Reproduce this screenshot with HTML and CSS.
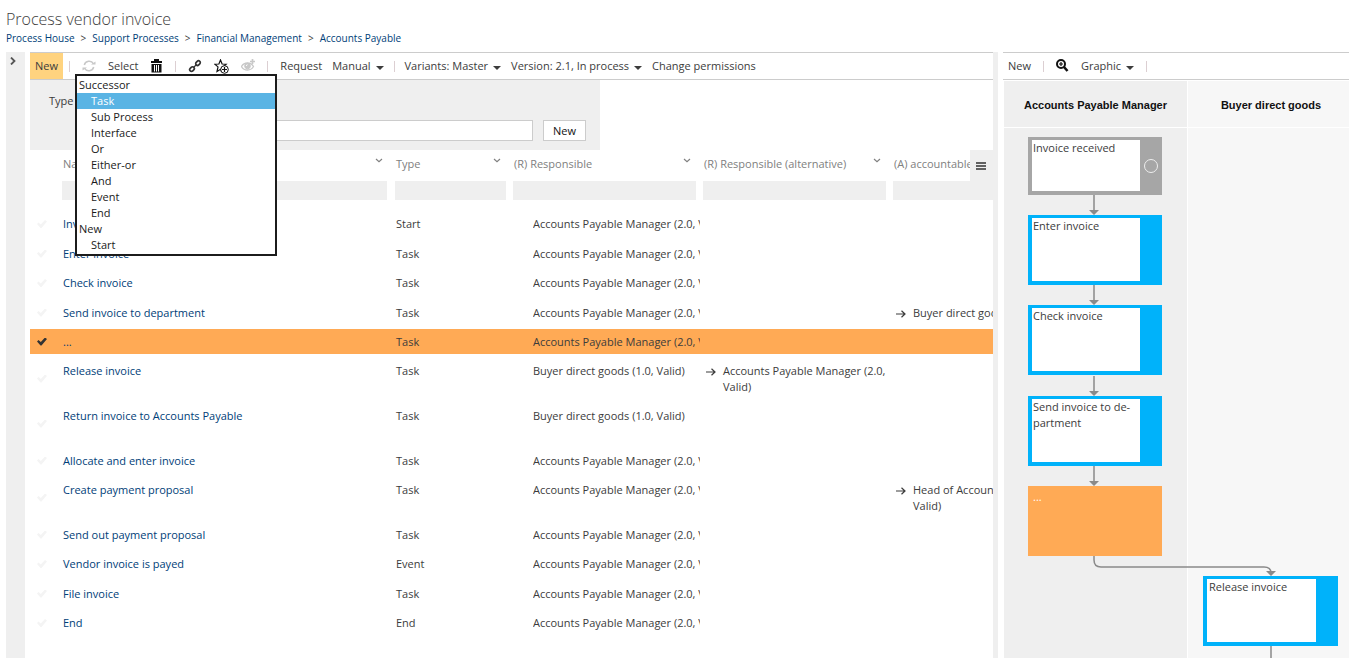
FILE: index.html
```html
<!DOCTYPE html>
<html lang="en">
<head>
<meta charset="utf-8">
<title>Process vendor invoice</title>
<link rel="stylesheet" href="styles.css">
</head>
<body>
<svg class="defs" aria-hidden="true">
  <symbol id="chev" viewBox="0 0 8 5"><path d="M1 1l3 2.600L7 1" fill="none" stroke="currentColor" stroke-width="1.200"/></symbol>
  <symbol id="caret" viewBox="0 0 8 4"><path d="M0 0h8L4 4z" fill="currentColor"/></symbol>
  <symbol id="arrow" viewBox="0 0 10 8"><path d="M0 4h9M5.500 .8L9 4 5.500 7.200" fill="none" stroke="currentColor" stroke-width="1.200"/></symbol>
</svg>
<header class="page-head">
  <h1 class="title">Process vendor invoice</h1>
  <nav class="crumbs" aria-label="Breadcrumb">
    <a href="#">Process House</a><span>&gt;</span><a href="#">Support Processes</a><span>&gt;</span><a href="#">Financial Management</a><span>&gt;</span><a href="#">Accounts Payable</a>
  </nav>
</header>
<main class="workspace">
  <aside class="rail">
    <button class="rail-toggle" aria-label="Expand"><svg width="6" height="8" viewBox="0 0 6 8"><path d="M1 .5L4.500 4 1 7.500" fill="none" stroke="#555" stroke-width="1.800"/></svg></button>
  </aside>
  <section class="list-pane">
    <div class="toolbar">
      <button class="tool tool-active">New</button>
      <i class="sep sep-first"></i>
      <button class="tool" aria-label="Refresh"><svg width="14" height="14" viewBox="0 0 14 14" fill="none" stroke="#c8c8c8" stroke-width="1.500"><path d="M2.300 6A5 5 0 0 1 11.500 4.800M11.700 8A5 5 0 0 1 2.500 9.200"/><path d="M9 5.500h4.500V2.500zM5 8.500H.5v3z" fill="#c8c8c8" stroke="none"/></svg></button>
      <button class="tool">Select</button>
      <button class="tool" aria-label="Delete"><svg width="13" height="14" viewBox="0 0 13 14"><path d="M4 0h5v2h3v2H1V2h3zM1.500 5h10v8.500h-10z" fill="#111"/><path d="M4.500 6v6.500M6.500 6v6.500M8.500 6v6.500" stroke="#fff"/></svg></button>
      <i class="sep"></i>
      <button class="tool" aria-label="Link"><svg width="14" height="14" viewBox="0 0 14 14" fill="none" stroke="#333" stroke-width="1.700"><rect x="7.500" y="2.300" width="5" height="3.600" rx="1.800" transform="rotate(-45 10 4.100)"/><rect x="1.500" y="8.300" width="5" height="3.600" rx="1.800" transform="rotate(-45 4 10.100)"/><path d="M5.500 8.500l3-3" stroke-width="1.300"/></svg></button>
      <button class="tool" aria-label="Add favourite"><svg width="15" height="15" viewBox="0 0 15 15" fill="none" stroke="#111"><path d="M6.500 1l1.600 4 4 .2-3 2.600L7 11.500l-.5-1.200L3 12.500l1-4.600L.8 5.200l4.100-.2z" stroke-width="1.200"/><circle cx="10.500" cy="10.500" r="3.800" fill="#fff"/><path d="M10.500 8v5M8 10.500h5" stroke-width="1.200"/></svg></button>
      <button class="tool" aria-label="Watch"><svg width="14" height="14" viewBox="0 0 14 14" fill="none" stroke="#c8c8c8"><path d="M.5 7.500Q2.500 4 6.500 4T12.500 7.500Q10.500 11 6.500 11T.5 7.500z" stroke-width="1.300"/><circle cx="6.500" cy="7" r="2.800" fill="#c8c8c8"/><path d="M5.300 7q0-1.300 1.200-1.300" stroke="#fff"/><path d="M11.500 0v5M9 2.500h5" stroke-width="1.700"/></svg></button>
      <i class="sep"></i>
      <div class="tool-group">
        <button class="tool">Request</button>
        <button class="tool">Manual<svg class="caret"><use href="#caret"/></svg></button>
        <i class="sep"></i>
        <button class="tool">Variants: Master<svg class="caret"><use href="#caret"/></svg></button>
        <button class="tool">Version: 2.1, In process<svg class="caret"><use href="#caret"/></svg></button>
        <button class="tool">Change permissions</button>
      </div>
    </div>
    <form class="create-form">
      <label class="field-label" for="type">Type</label>
      <div class="type-field">
        <select id="type" class="type-list" size="11">
          <optgroup label="Successor">
            <option selected>Task</option><option>Sub Process</option><option>Interface</option><option>Or</option><option>Either-or</option><option>And</option><option>Event</option><option>End</option>
          </optgroup>
          <optgroup label="New"><option>Start</option></optgroup>
        </select>
      </div>
      <input class="name-input" type="text" aria-label="Name">
      <button class="create-btn" type="button">New</button>
    </form>
    <div class="grid-wrap">
      <button class="grid-menu" aria-label="Columns"><svg width="10" height="8" viewBox="0 0 10 8"><path d="M0 1h10M0 4h10M0 7h10" stroke="#333" stroke-width="1.500"/></svg></button>
      <table class="grid">
        <colgroup><col class="c-check"><col class="c-name"><col class="c-type"><col class="c-role"><col class="c-role"><col class="c-role"></colgroup>
        <thead>
          <tr class="heads"><th></th><th>Name<svg class="chev"><use href="#chev"/></svg></th><th>Type<svg class="chev"><use href="#chev"/></svg></th><th>(R) Responsible<svg class="chev"><use href="#chev"/></svg></th><th>(R) Responsible (alternative)<svg class="chev"><use href="#chev"/></svg></th><th>(A) accountable</th></tr>
          <tr class="filters"><td></td><td><input class="filter" aria-label="Filter name"></td><td><input class="filter" aria-label="Filter type"></td><td><input class="filter" aria-label="Filter responsible"></td><td><input class="filter" aria-label="Filter alternative"></td><td><input class="filter" aria-label="Filter accountable"></td></tr>
        </thead>
        <tbody>
          <tr><td><input type="checkbox" class="tick" aria-label="Invoice received"></td><td><a href="#">Invoice received</a></td><td>Start</td><td><div class="role">Accounts Payable Manager (2.0, Valid)</div></td><td></td><td></td></tr>
          <tr><td><input type="checkbox" class="tick" aria-label="Enter invoice"></td><td><a href="#">Enter invoice</a></td><td>Task</td><td><div class="role">Accounts Payable Manager (2.0, Valid)</div></td><td></td><td></td></tr>
          <tr><td><input type="checkbox" class="tick" aria-label="Check invoice"></td><td><a href="#">Check invoice</a></td><td>Task</td><td><div class="role">Accounts Payable Manager (2.0, Valid)</div></td><td></td><td></td></tr>
          <tr><td><input type="checkbox" class="tick" aria-label="Send invoice to department"></td><td><a href="#">Send invoice to department</a></td><td>Task</td><td><div class="role">Accounts Payable Manager (2.0, Valid)</div></td><td></td><td><div class="ref"><svg class="arrow"><use href="#arrow"/></svg>Buyer direct goods (1.0, Valid)</div></td></tr>
          <tr class="selected"><td><input type="checkbox" class="tick" checked aria-label="..."></td><td><a href="#">...</a></td><td>Task</td><td><div class="role">Accounts Payable Manager (2.0, Valid)</div></td><td></td><td></td></tr>
          <tr class="tall"><td><input type="checkbox" class="tick" aria-label="Release invoice"></td><td><a href="#">Release invoice</a></td><td>Task</td><td><div class="role">Buyer direct goods (1.0, Valid)</div></td><td><div class="ref"><svg class="arrow"><use href="#arrow"/></svg><span>Accounts Payable Manager (2.0,<br>Valid)</span></div></td><td></td></tr>
          <tr class="tall"><td><input type="checkbox" class="tick" aria-label="Return invoice"></td><td><a href="#">Return invoice to Accounts Payable</a></td><td>Task</td><td><div class="role">Buyer direct goods (1.0, Valid)</div></td><td></td><td></td></tr>
          <tr><td><input type="checkbox" class="tick" aria-label="Allocate and enter invoice"></td><td><a href="#">Allocate and enter invoice</a></td><td>Task</td><td><div class="role">Accounts Payable Manager (2.0, Valid)</div></td><td></td><td></td></tr>
          <tr class="tall"><td><input type="checkbox" class="tick" aria-label="Create payment proposal"></td><td><a href="#">Create payment proposal</a></td><td>Task</td><td><div class="role">Accounts Payable Manager (2.0, Valid)</div></td><td></td><td><div class="ref"><svg class="arrow"><use href="#arrow"/></svg><span>Head of Accounting (1.0,<br>Valid)</span></div></td></tr>
          <tr><td><input type="checkbox" class="tick" aria-label="Send out payment proposal"></td><td><a href="#">Send out payment proposal</a></td><td>Task</td><td><div class="role">Accounts Payable Manager (2.0, Valid)</div></td><td></td><td></td></tr>
          <tr><td><input type="checkbox" class="tick" aria-label="Vendor invoice is payed"></td><td><a href="#">Vendor invoice is payed</a></td><td>Event</td><td><div class="role">Accounts Payable Manager (2.0, Valid)</div></td><td></td><td></td></tr>
          <tr><td><input type="checkbox" class="tick" aria-label="File invoice"></td><td><a href="#">File invoice</a></td><td>Task</td><td><div class="role">Accounts Payable Manager (2.0, Valid)</div></td><td></td><td></td></tr>
          <tr><td><input type="checkbox" class="tick" aria-label="End"></td><td><a href="#">End</a></td><td>End</td><td><div class="role">Accounts Payable Manager (2.0, Valid)</div></td><td></td><td></td></tr>
        </tbody>
      </table>
    </div>
  </section>
  <div class="splitter"></div>
  <section class="graph-pane">
    <div class="toolbar toolbar-graph">
      <button class="tool">New</button>
      <i class="sep"></i>
      <button class="tool" aria-label="Zoom"><svg width="13" height="14" viewBox="0 0 13 14" fill="none" stroke="#111"><circle cx="5" cy="5" r="4" stroke-width="2"/><path d="M5 3v4M3 5h4" stroke-width="1.200"/><path d="M8 8l3.500 4" stroke-width="2.500"/></svg></button>
      <button class="tool">Graphic<svg class="caret"><use href="#caret"/></svg></button>
      <i class="sep"></i>
    </div>
    <div class="lanes">
      <h2 class="lane-head">Accounts Payable Manager</h2>
      <h2 class="lane-head lane-light">Buyer direct goods</h2>
      <div class="lane"></div>
      <div class="lane lane-light"></div>
      <div class="canvas">
        <svg class="edges" width="346" height="530" viewBox="0 0 346 530" fill="none" stroke="#8a8a8a" stroke-width="1.500">
          <path d="M90 67v17M90 157v17M90 248v17M90 338v17M90 428v4q0 7 7 7h163q7 0 7 6M267 518v12"/>
          <path d="M85 82h10l-5 5zM85 172h10l-5 5zM85 263h10l-5 5zM85 353h10l-5 5zM262 443h10l-5 5z" fill="#8a8a8a" stroke="none"/>
        </svg>
        <div class="node node-start n1"><p class="node-text">Invoice received</p><span class="ring"></span></div>
        <div class="node n2"><p class="node-text">Enter invoice</p></div>
        <div class="node n3"><p class="node-text">Check invoice</p></div>
        <div class="node n4"><p class="node-text">Send invoice to de-<br>partment</p></div>
        <div class="node node-selected n5"><p class="node-text">...</p></div>
        <div class="node n6"><p class="node-text">Release invoice</p></div>
      </div>
    </div>
  </section>
</main>
</body>
</html>
```
FILE: styles.css
```css
* { box-sizing: border-box; }
body {
  margin: 0;
  height: 100vh;
  display: flex;
  flex-direction: column;
  overflow: hidden;
  background: #fff;
  color: #3c3c3c;
  font: 11px/16px "Open Sans", "Noto Sans", sans-serif;
}
button, input, select { font: inherit; color: inherit; margin: 0; }
button { background: none; border: 0; padding: 0; }
a { color: #003e78; text-decoration: none; }
svg { display: block; }
.defs { position: absolute; width: 0; height: 0; }

.page-head { height: 52px; padding: 8px 6px 0; flex: none; }
.title { margin: 0; font-size: 16px; font-weight: 300; line-height: 22px; }
.crumbs { display: flex; gap: 6px; font-size: 10px; line-height: 16px; }

.workspace { flex: 1; min-height: 0; display: flex; }
.rail { flex: none; width: 19px; margin: 0 5px 0 6px; background: #efefef; }
.rail-toggle { padding: 5px 4px; }
.list-pane { flex: 1; min-width: 0; overflow: hidden; }
.splitter { flex: none; width: 5px; margin-right: 5px; background: #efefef; }
.graph-pane { flex: none; width: 346px; display: flex; flex-direction: column; }

.toolbar {
  flex: none;
  height: 28px;
  display: flex;
  align-items: center;
  gap: 12px;
  border-top: 1px solid #ccc;
  border-bottom: 1px solid #ccc;
  white-space: nowrap;
}
.toolbar-graph { padding-left: 5px; }
.tool-group { display: flex; align-items: center; gap: 10px; }
.tool { display: flex; align-items: center; gap: 5px; }
.tool-active { align-self: stretch; padding: 0 5px; background: #ffd37f; }
.sep { width: 1px; height: 11px; background: #dccfd2; }
.sep-first { margin-left: -6px; }
.caret { width: 8px; height: 4px; margin-top: 3px; }

.create-form {
  width: 570px;
  height: 70px;
  padding: 12px 14px 9px 19px;
  display: grid;
  grid-template: 1fr 21px / 26px 1fr 43px;
  background: #efefef;
}
.field-label { line-height: 18px; }
.type-field { position: relative; grid-column: 2 / 4; }
.type-list {
  position: absolute;
  z-index: 2;
  top: -18px;
  left: 0;
  width: 202px;
  height: 182px;
  padding: 1px 0;
  border: 2px solid #1c1c1c;
  border-radius: 0;
  outline: 0;
  overflow: hidden;
  background: #fff;
  color: #1a1a1a;
}
.type-list optgroup { font-weight: 400; line-height: 16px; }
.type-list option { min-height: 16px; line-height: 16px; padding: 0 0 0 14px; }
.type-list option:checked { background: #5ab4e4; color: #fff; }
.name-input { grid-column: 2; margin-right: 10px; border: 1px solid #ccc; background: #fff; }
.create-btn { border: 1px solid #ccc; background: #fff; color: #111; }

.grid-wrap { position: relative; overflow: hidden; }
.grid-menu {
  position: absolute;
  z-index: 1;
  top: 0;
  right: 0;
  width: 23px;
  height: 31px;
  padding-left: 6px;
  background: #efefef;
}
.grid { table-layout: fixed; width: 1053px; border-spacing: 0; }
.c-check { width: 32px; }
.c-name { width: 333px; }
.c-type { width: 118px; }
.c-role { width: 190px; }
.grid th, .grid td { padding: 0; text-align: left; vertical-align: top; }
.heads th {
  position: relative;
  height: 31px;
  padding: 6px 0 0 1px;
  font-weight: 400;
  color: #808080;
}
.chev { position: absolute; top: 8px; right: 12px; width: 8px; height: 5px; }
.filters td { height: 30px; padding-right: 7px; }
.filters td:nth-child(2) { padding-right: 8px; }
.filter { display: block; width: 100%; height: 19px; padding: 0 2px; border: 0; background: #efefef; }
.grid tbody td {
  height: 29px;
  padding: 5px 0 0 1px;
  border-bottom: 4px solid transparent;
  background-clip: padding-box;
}
.grid tbody tr:nth-child(odd) td { height: 30px; }
.grid tbody tr.selected td { height: 29px; background-color: #ffaa55; }
.grid tbody tr.tall td { height: 45px; }
.grid tbody td:first-child { padding: 0 0 0 7px; vertical-align: middle; }
.tick {
  display: block;
  appearance: none;
  width: 10px;
  height: 8px;
  background: #f4f4f4;
  clip-path: polygon(0 50%, 15% 32%, 38% 55%, 80% 0, 100% 18%, 45% 100%, 35% 100%);
}
.tick:checked { background: #333; }
.role { margin-left: 19px; width: 167px; overflow: hidden; white-space: nowrap; }
.ref { display: flex; gap: 7px; padding-left: 2px; white-space: nowrap; }
.arrow { flex: none; width: 10px; height: 8px; margin-top: 5px; }

.lanes {
  position: relative;
  flex: 1;
  min-height: 0;
  display: grid;
  grid-template: 46px 1fr / 183px 1fr;
  gap: 1px;
  padding: 1px 0 0 1px;
}
.lane-head {
  margin: 0;
  background: #efefef;
  color: #111;
  text-align: center;
  font: 700 11px/48px "Liberation Sans", Arial, sans-serif;
}
.lane { background: #efefef; }
.lane-light { background: #f7f7f7; }
.lane-head.lane-light { padding-left: 5px; }
.canvas { position: absolute; top: 48px; left: 1px; right: 0; bottom: 0; overflow: hidden; }
.edges { position: absolute; top: 0; left: 0; }
.node {
  position: absolute;
  left: 24px;
  width: 134px;
  height: 70px;
  padding: 3px 22px 4px 4px;
  background: #00b2fa;
}
.node-text { margin: 0; height: 100%; padding-left: 1px; background: #fff; line-height: 16px; white-space: nowrap; }
.node-start { height: 58px; background: #a6a6a6; }
.node-selected { background: #ffaa55; }
.node-selected .node-text { background: none; color: #fff; }
.ring {
  position: absolute;
  top: 22px;
  right: 4px;
  width: 14px;
  height: 14px;
  border: 1px solid #eee;
  border-radius: 50%;
}
.n1 { top: 9px; }
.n2 { top: 87px; }
.n3 { top: 177px; }
.n4 { top: 268px; }
.n5 { top: 358px; }
.n6 { top: 448px; left: 199px; width: 135px; }
.n6 .node-text { padding-left: 2px; }
```
